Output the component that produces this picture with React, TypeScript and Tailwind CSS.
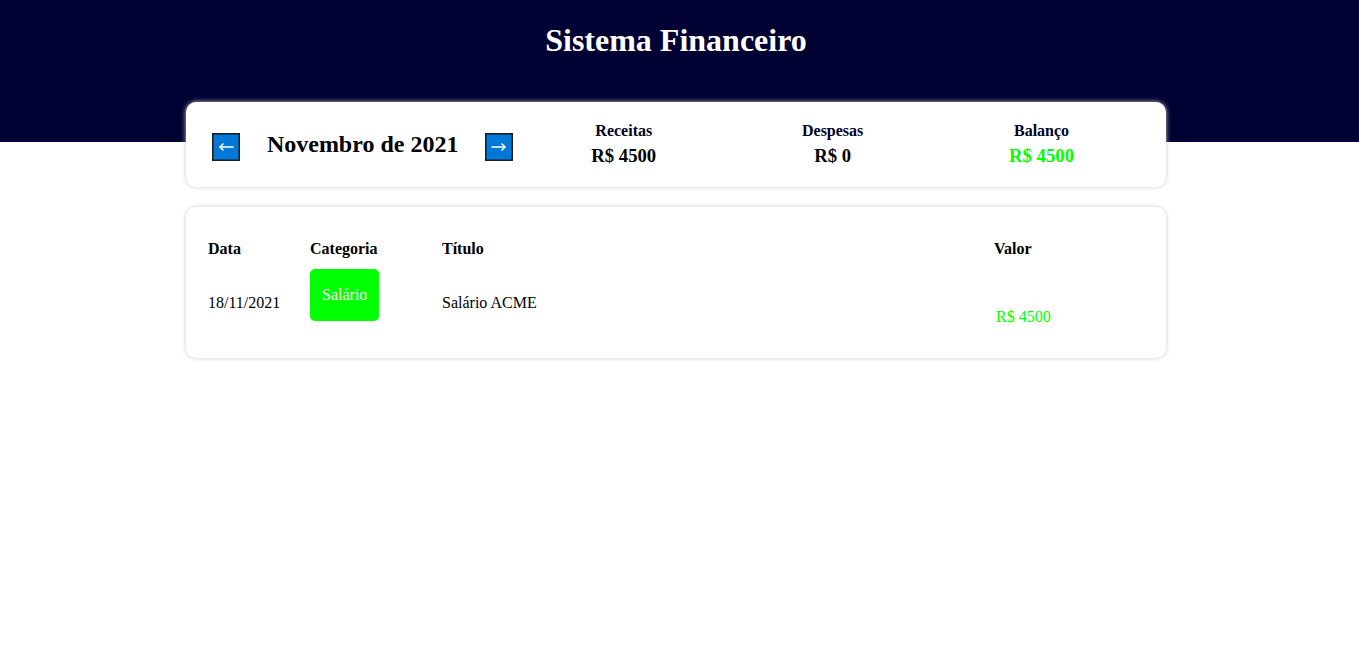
import React from "react";

const serif = { fontFamily: '"Liberation Serif", "Times New Roman", serif' };

function ArrowBox({ dir }: { dir: "left" | "right" }) {
  return (
    <svg width="28" height="28" viewBox="0 0 28 28">
      <rect x="0.75" y="0.75" width="26.5" height="26.5" fill="#0078d7" stroke="#1b1b1b" strokeWidth="1.5" />
      {dir === "left" ? (
        <g stroke="#fff" strokeWidth="1.6" fill="none" strokeLinecap="round" strokeLinejoin="round">
          <line x1="8" y1="14" x2="21" y2="14" />
          <polyline points="11,11 8,14 11,17" />
        </g>
      ) : (
        <g stroke="#fff" strokeWidth="1.6" fill="none" strokeLinecap="round" strokeLinejoin="round">
          <line x1="7" y1="14" x2="20" y2="14" />
          <polyline points="17,11 20,14 17,17" />
        </g>
      )}
    </svg>
  );
}

function ResumeItem({ title, value, green }: { title: string; value: string; green?: boolean }) {
  return (
    <div className="flex-1 flex flex-col items-center">
      <div className="text-[16px] font-bold leading-[18px] text-[#000022]">{title}</div>
      <div className={`text-[18.7px] font-bold leading-[22px] mt-[5px] ${green ? "text-[#00ff00]" : "text-black"}`}>{value}</div>
    </div>
  );
}

export default function App() {
  return (
    <div className="min-h-[645px] bg-white text-black" style={serif}>
      <div className="h-[142px] bg-[#000033] pt-[22px] pr-[7px]">
        <h1 className="text-center text-white text-[32px] font-bold leading-[36px]">Sistema Financeiro</h1>
      </div>
      <div className="pr-[7px]">
        <div className="w-[980px] mx-auto">
          <div className="-mt-[40px] bg-white rounded-[10px] shadow-[0_0_5px_#ccc] p-[20px] flex items-center h-[85px]">
            <div className="flex-1 flex items-center -mt-[1px]">
              <div className="w-[40px] flex justify-center pt-[5px]">
                <ArrowBox dir="left" />
              </div>
              <div className="flex-1 text-center text-[24px] font-bold leading-[28px]">Novembro de 2021</div>
              <div className="w-[40px] flex justify-center pt-[5px]">
                <ArrowBox dir="right" />
              </div>
            </div>
            <div className="flex-[2] flex">
              <ResumeItem title="Receitas" value="R$ 4500" />
              <ResumeItem title="Despesas" value="R$ 0" />
              <ResumeItem title="Balanço" value="R$ 4500" green />
            </div>
          </div>

          <div className="mt-[20px] bg-white rounded-[10px] shadow-[0_0_5px_#ccc] p-[20px] h-[151px]">
            <div className="px-[2px] pt-[2px]">
              <div className="grid grid-cols-[100px_130px_1fr_150px] gap-x-[2px] text-[16px] font-bold leading-[18px] h-[40px] items-center">
                <div>Data</div>
                <div>Categoria</div>
                <div>Título</div>
                <div>Valor</div>
              </div>
              <div className="grid grid-cols-[100px_130px_1fr_150px] gap-x-[2px] text-[16px] leading-[18px] h-[66px]">
                <div className="flex items-center pt-[1px]">18/11/2021</div>
                <div>
                  <div className="inline-block bg-[#00ff00] text-white rounded-[5px] px-[12px] py-[17px] leading-[18px]">Salário</div>
                </div>
                <div className="flex items-center pt-[1px]">Salário ACME</div>
                <div className="pt-[39px] pl-[2px] text-[#00ff00]">R$ 4500</div>
              </div>
            </div>
          </div>
        </div>
      </div>
    </div>
  );
}
